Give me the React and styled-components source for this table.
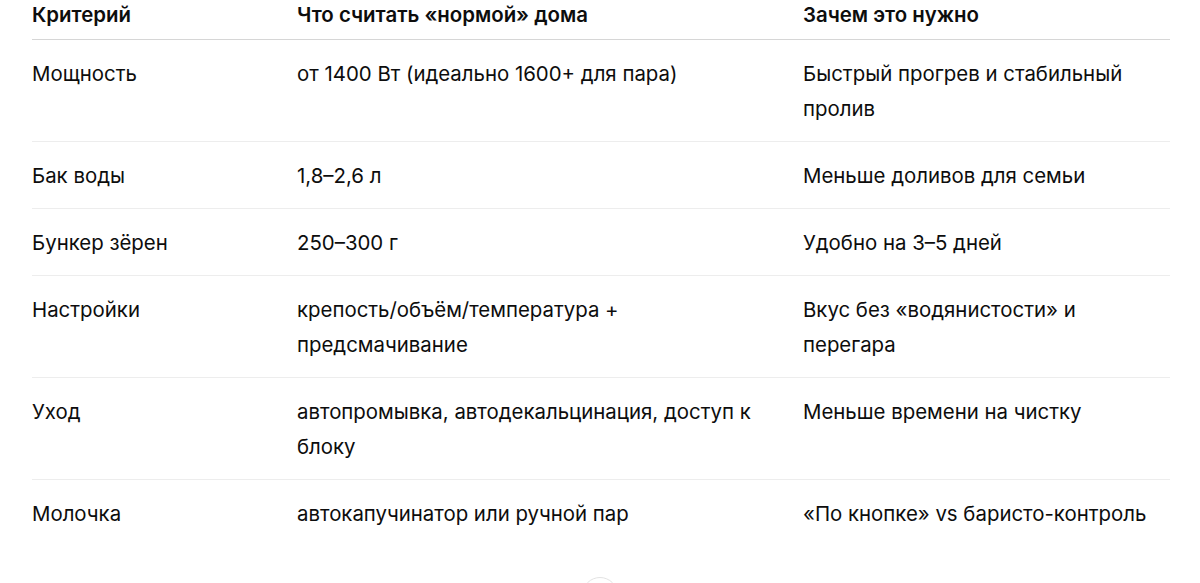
import React from "react";
import styled, { createGlobalStyle } from "styled-components";

const Global = createGlobalStyle`
  html, body { margin: 0; padding: 0; background: #fff; }
  body {
    font-family: Inter, "Noto Sans", "Liberation Sans", sans-serif;
    color: #0d0d0d;
    -webkit-font-smoothing: antialiased;
  }
`;

const Page = styled.div`
  position: relative;
  width: 1200px;
  height: 583px;
  overflow: hidden;
  padding: 0 30px 0 32px;
  box-sizing: border-box;
`;

const Table = styled.div`
  display: grid;
  grid-template-columns: 265px 506px 1fr;
  font-size: 20.4px;
`;

const HeadCell = styled.div`
  font-weight: 600;
  line-height: 30px;
  padding: 0 20px 9px 0;
  border-bottom: 1px solid #d6d6d6;
`;

const Cell = styled.div`
  font-weight: 400;
  line-height: 35px;
  padding: 16px 20px 15px 0;
  border-bottom: ${(p) => (p.$last ? "none" : "1px solid #ededed")};
`;

const ScrollButton = styled.div`
  position: absolute;
  left: 50%;
  top: 577px;
  width: 36px;
  height: 36px;
  transform: translateX(-50%);
  border-radius: 50%;
  border: 1px solid #e3e3e3;
  background: #fff;
  box-sizing: border-box;
`;

const headers = ["Критерий", "Что считать «нормой» дома", "Зачем это нужно"];

const rows = [
  ["Мощность", "от 1400 Вт (идеально 1600+ для пара)", "Быстрый прогрев и стабильный пролив"],
  ["Бак воды", "1,8–2,6 л", "Меньше доливов для семьи"],
  ["Бункер зёрен", "250–300 г", "Удобно на 3–5 дней"],
  ["Настройки", "крепость/объём/температура + предсмачивание", "Вкус без «водянистости» и перегара"],
  ["Уход", "автопромывка, автодекальцинация, доступ к блоку", "Меньше времени на чистку"],
  ["Молочка", "автокапучинатор или ручной пар", "«По кнопке» vs баристо-контроль"],
];

export default function App() {
  return (
    <>
      <Global />
      <Page>
        <Table>
          {headers.map((h) => (
            <HeadCell key={h}>{h}</HeadCell>
          ))}
          {rows.map((r, i) =>
            r.map((c, j) => (
              <Cell key={i + "-" + j} $last={i === rows.length - 1}>
                {c}
              </Cell>
            ))
          )}
        </Table>
        <ScrollButton />
      </Page>
    </>
  );
}
